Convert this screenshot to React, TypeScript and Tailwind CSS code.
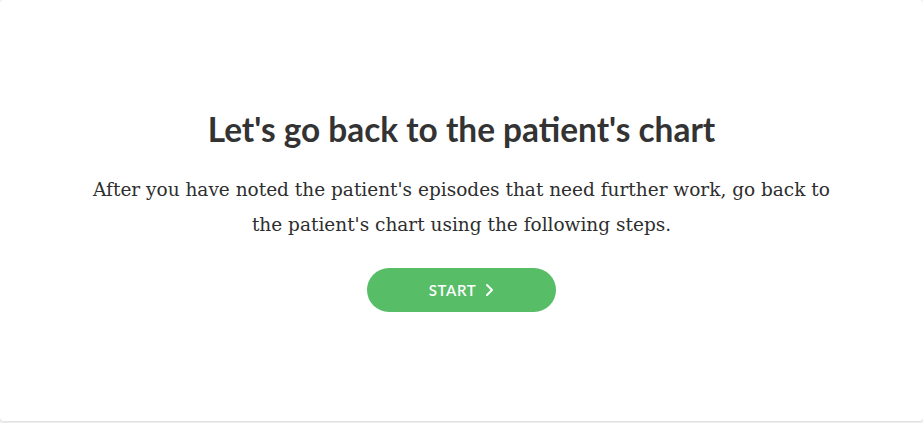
export default function App() {
  return (
    <div className="min-h-[423px] w-full bg-[#f1f1f1]">
      <div className="flex h-[421px] flex-col items-center rounded-[4px] bg-white pt-[108px] shadow-[0_1px_2px_rgba(0,0,0,0.08)]">
        <h1 className="font-['Lato',sans-serif] text-[33.4px] font-bold leading-[42px] text-[#333]">
          Let's go back to the patient's chart
        </h1>
        <p className="mt-[22px] max-w-[760px] text-center font-['DejaVu_Serif',serif] text-[18.5px] leading-[35px] text-[#2e2e2e]">
          After you have noted the patient's episodes that need further work, go back to the patient's chart using the following steps.
        </p>
        <button
          type="button"
          className="mt-[26px] flex h-[44px] w-[189px] items-center justify-center gap-[8px] rounded-full bg-[#58bd67] font-['Lato',sans-serif] text-[15px] font-semibold tracking-[0.6px] text-white"
        >
          START
          <svg width="10" height="14" viewBox="0 0 10 14" fill="none">
            <path d="M3 2l5 5-5 5" stroke="white" strokeWidth="2" strokeLinecap="round" strokeLinejoin="round" />
          </svg>
        </button>
      </div>
    </div>
  );
}
